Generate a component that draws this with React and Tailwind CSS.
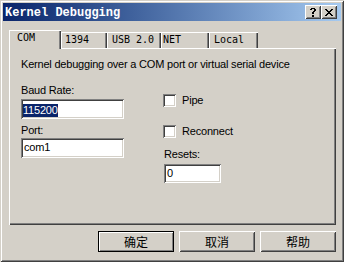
import React from "react";

const raised =
  "shadow-[inset_1px_1px_#ffffff,inset_-1px_-1px_#404040,inset_2px_2px_#d4d0c8,inset_-2px_-2px_#808080]";
const sunken =
  "shadow-[inset_1px_1px_#808080,inset_-1px_-1px_#ffffff,inset_2px_2px_#404040,inset_-2px_-2px_#d4d0c8]";
const tabEdge =
  "shadow-[inset_1px_1px_#ffffff,inset_-1px_0_#404040,inset_-2px_0_#808080]";

function HelpGlyph() {
  const px = [
    [1, 0], [2, 0], [3, 0], [4, 0],
    [0, 1], [1, 1], [4, 1], [5, 1],
    [4, 2], [5, 2],
    [3, 3], [4, 3],
    [2, 4], [3, 4],
    [2, 5], [3, 5],
    [2, 7], [3, 7],
    [2, 8], [3, 8],
  ];
  return (
    <svg width="6" height="9" viewBox="0 0 6 9" shapeRendering="crispEdges">
      {px.map(([x, y], i) => (
        <rect key={i} x={x} y={y} width="1" height="1" fill="#000" />
      ))}
    </svg>
  );
}

function CloseGlyph() {
  const rows = [
    "XX....XX",
    ".XX..XX.",
    "..XXXX..",
    "...XX...",
    "..XXXX..",
    ".XX..XX.",
    "XX....XX",
  ];
  const px = [];
  rows.forEach((r, y) =>
    r.split("").forEach((c, x) => {
      if (c === "X") px.push([x, y]);
    })
  );
  return (
    <svg width="8" height="7" viewBox="0 0 8 7" shapeRendering="crispEdges">
      {px.map(([x, y], i) => (
        <rect key={i} x={x} y={y} width="1" height="1" fill="#000" />
      ))}
    </svg>
  );
}

function Checkbox({ label }) {
  return (
    <div className="flex items-center">
      <div className={`w-[13px] h-[13px] bg-white ${sunken}`} />
      <span className="ml-[6px] leading-[13px]">{label}</span>
    </div>
  );
}

export default function App() {
  return (
    <div
      className={`w-[344px] h-[262px] bg-[#d4d0c8] p-[3px] flex flex-col overflow-hidden font-['Liberation_Sans',sans-serif] text-[11px] tracking-[-0.2px] text-black ${"shadow-[inset_1px_1px_#d4d0c8,inset_-1px_-1px_#404040,inset_2px_2px_#ffffff,inset_-2px_-2px_#808080]"}`}
    >
      {/* Title bar */}
      <div className="h-[18px] flex items-center bg-linear-to-r from-[#0a246a] to-[#a6caf0]">
        <span className="pl-[2px] pt-[1px] text-white font-bold text-[12px] tracking-normal leading-[18px] font-['Liberation_Mono',monospace]">
          Kernel Debugging
        </span>
        <div className="ml-auto mr-[4px] flex">
          <div className={`w-[16px] h-[14px] bg-[#d4d0c8] flex items-center justify-center ${raised}`}>
            <HelpGlyph />
          </div>
          <div className={`w-[16px] h-[14px] bg-[#d4d0c8] flex items-center justify-center ${raised}`}>
            <CloseGlyph />
          </div>
        </div>
      </div>

      {/* Tabs */}
      <div className="mt-[9px] ml-[6px] h-[18px] flex items-start font-['DejaVu_Sans_Mono',monospace] text-[10px] tracking-normal leading-[12px]">
        <div className={`relative z-10 w-[52px] h-[19px] bg-[#d4d0c8] pl-[8px] pt-[2px] ${tabEdge}`}>
          COM
        </div>
        <div className={`mt-[2px] w-[46px] h-[16px] pl-[4px] pt-[2px] ${tabEdge}`}>1394</div>
        <div className={`mt-[2px] w-[54px] h-[16px] pl-[5px] pt-[2px] ${tabEdge}`}>USB 2.0</div>
        <div className={`mt-[2px] w-[48px] h-[16px] pl-[2px] pt-[2px] ${tabEdge}`}>NET</div>
        <div className={`mt-[2px] w-[49px] h-[16px] pl-[5px] pt-[2px] ${tabEdge}`}>Local</div>
      </div>

      {/* Panel */}
      <div
        className={`ml-[6px] w-[327px] h-[177px] pl-[12px] pt-[10px] ${"shadow-[inset_1px_1px_#ffffff,inset_-1px_-1px_#404040,inset_-2px_-2px_#808080]"}`}
      >
        <p className="leading-[13px]">Kernel debugging over a COM port or virtual serial device</p>
        <div className="mt-[13px] flex">
          <div className="w-[103px] flex flex-col">
            <span className="leading-[13px]">Baud Rate:</span>
            <div className={`mt-[2px] h-[20px] bg-white pl-[2px] pt-[3px] ${sunken}`}>
              <span className="bg-[#0a246a] text-white leading-[13px] inline-block">115200</span>
            </div>
            <span className="mt-[5px] leading-[13px]">Port:</span>
            <div className={`mt-[1px] h-[20px] bg-white pl-[3px] pt-[3px] leading-[13px] ${sunken}`}>com1</div>
          </div>
          <div className="ml-[39px] flex flex-col">
            <div className="mt-[10px]">
              <Checkbox label="Pipe" />
            </div>
            <div className="mt-[18px]">
              <Checkbox label="Reconnect" />
            </div>
            <span className="mt-[10px] ml-[1px] leading-[13px]">Resets:</span>
            <div className={`mt-[3px] ml-[1px] w-[57px] h-[19px] bg-white pl-[3px] pt-[3px] leading-[13px] ${sunken}`}>0</div>
          </div>
        </div>
      </div>

      {/* Buttons */}
      <div className="mt-[6px] mr-[5px] flex justify-end gap-[5px] font-['Noto_Sans_CJK_SC',sans-serif] text-[12px] tracking-normal">
        <div
          className={`w-[76px] h-[21px] flex items-center justify-center leading-none ${"shadow-[inset_0_0_0_1px_#000000,inset_2px_2px_#ffffff,inset_-2px_-2px_#808080]"}`}
        >
          确定
        </div>
        <div className={`w-[76px] h-[21px] flex items-center justify-center leading-none ${raised}`}>取消</div>
        <div className={`w-[76px] h-[21px] flex items-center justify-center leading-none ${raised}`}>帮助</div>
      </div>
    </div>
  );
}
